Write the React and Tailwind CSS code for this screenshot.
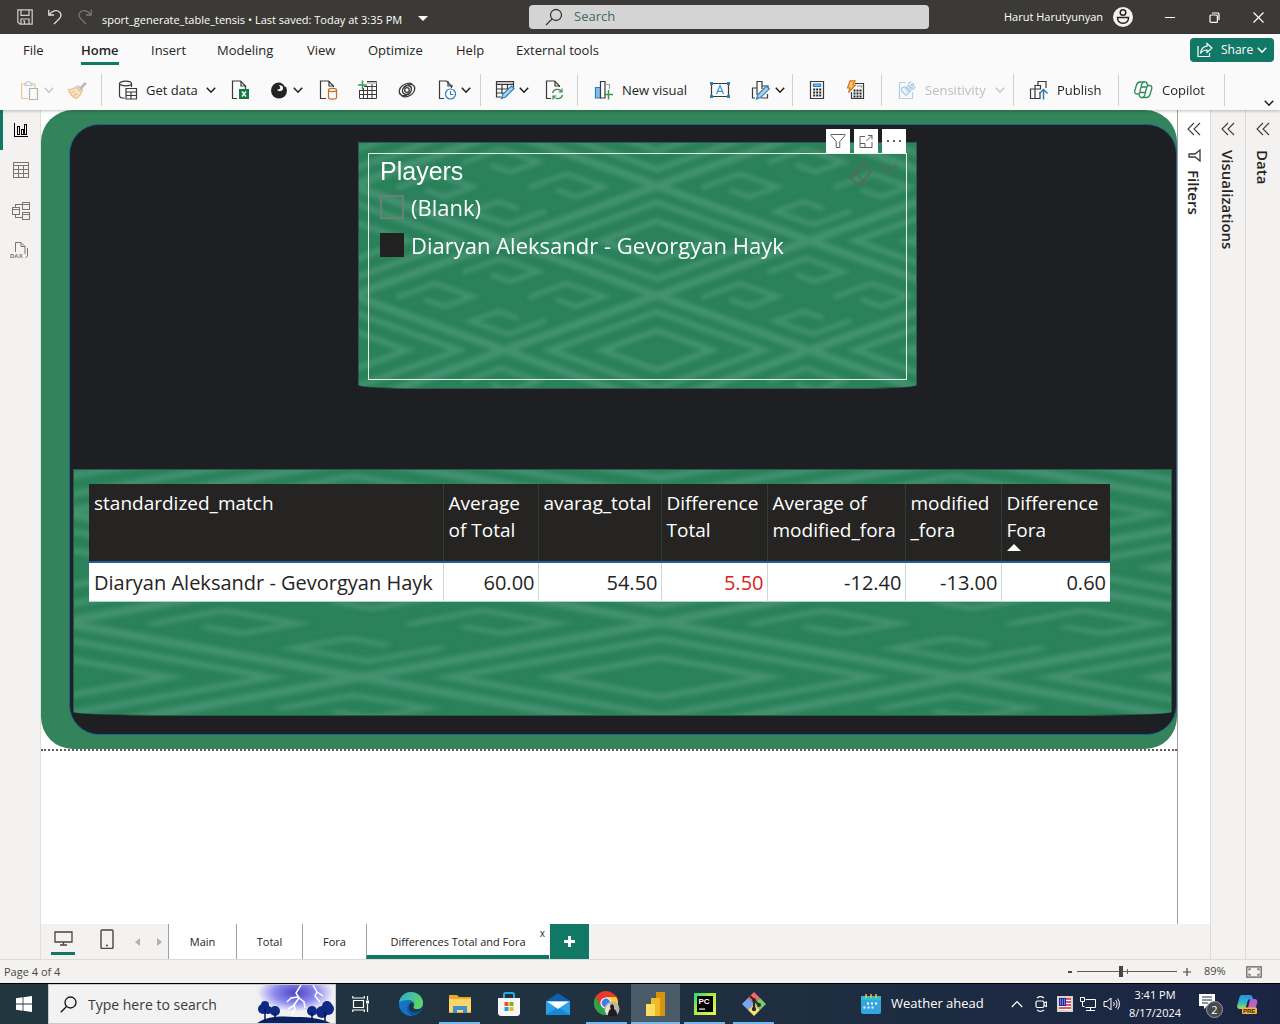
import React from "react";

/* ---------- shared helpers ---------- */

function Svg({ w = 20, h = 20, className = "", children, ...rest }) {
  return (
    <svg
      width={w}
      height={h}
      viewBox={`0 0 ${w} ${h}`}
      fill="none"
      stroke="#3b3a39"
      strokeWidth="1.2"
      className={"block shrink-0 " + className}
      aria-hidden="true"
      {...rest}
    >
      {children}
    </svg>
  );
}

function Chevron({ color = "#201f1e", className = "" }) {
  return (
    <Svg w={10} h={8} className={className} stroke={color} strokeWidth="1.5">
      <path d="M.8 1.8 5 6.2 9.2 1.8" />
    </Svg>
  );
}

function Separator() {
  return <div className="h-8 w-px shrink-0 bg-[#d2d0ce]" />;
}

/* ---------- ribbon icons ---------- */

const PageOutline = ({ d = "M7 19H3V1h8l5 5v4" }) => (
  <>
    <path d={d} />
    <path d="M11 1v5h5" />
  </>
);

const PasteIcon = () => (
  <Svg stroke="#f0c595">
    <path d="M8 18.5H1.600V4H5M12 4h3v4" />
    <path d="M5 5.500V3.500h1.500a2 2 0 0 1 4 0H12v2z" stroke="#c8c6c4" />
    <path d="M9.500 8.500h8v11h-8z" stroke="#b5b3b1" />
  </Svg>
);

const BrushIcon = () => (
  <Svg stroke="#b5b3b1">
    <path d="m9 7 5.500 5.500M10.500 5.500l5.500 5.500M13 8l4.800-5.200 1 1L14 9" />
    <path d="M9 7C7 9 4 9.500 1.500 9.500c1 4 4 7.500 8 9 2-1.500 4-3.500 5-6z" fill="#fbe3c8" stroke="#eebd88" />
    <path d="m4 12.500 4-1M6.500 15.500l4-2" stroke="#eebd88" />
  </Svg>
);

const GetDataIcon = () => (
  <Svg>
    <ellipse cx="7.500" cy="3.500" rx="6" ry="2.300" />
    <path d="M1.500 3.500v12.500c0 1 2 2 5 2.200M13.500 3.500V7" />
    <path d="M8 8.500h10.500v10.500H8zM8 12h10.500M8 15.500h10.500M13 12v7" />
  </Svg>
);

const ExcelIcon = () => (
  <Svg>
    <PageOutline d="M7 18.500H2.500V1h8l5 5v3" />
    <path d="M9 9h10v10H9z" fill="#107c41" stroke="none" />
    <path d="m12 11.500 4 5M16 11.500l-4 5" stroke="#fff" strokeWidth="1.500" />
  </Svg>
);

const LakeIcon = () => (
  <Svg>
    <circle cx="10" cy="10.500" r="8" fill="#252423" stroke="none" />
    <path d="M9.500 5.500c2-.8 4 0 4.500 2 .3 1.500-.6 3-2 3.500-1.700.5-3.400-.3-4-1.500 2 .3 3.300-.5 3.200-2-.1-1-.7-1.700-1.700-2z" fill="#fff" stroke="none" />
    <path d="M12 1.500c3 .5 5.500 2.500 6.500 5l-2.500.5c-.8-2-2.200-3.300-4-4z" fill="#fafafa" stroke="none" />
  </Svg>
);

const SqlIcon = () => (
  <Svg>
    <PageOutline d="M8 18.500H2.500V1h8l5 5v1" />
    <ellipse cx="14.500" cy="10" rx="4" ry="1.600" stroke="#ca6a1c" />
    <path d="M10.500 10v7.500c0 2.200 8 2.200 8 0V10" stroke="#ca6a1c" />
  </Svg>
);

const EnterDataIcon = () => (
  <Svg>
    <path d="M10 1.500h9.500v17h-17V10M2.500 10.500h17M6.500 8v10.500M10.500 6v12.500M15 2v16.500M7 6.500h12.500M2.500 14.500h17" strokeWidth="1" />
    <path d="M10 2h9.500v2H10z" fill="#c8c6c4" stroke="none" />
    <path d="M5.500.5v9M1 5h9" stroke="#3a9a55" strokeWidth="1.500" />
  </Svg>
);

const DataverseIcon = () => (
  <Svg strokeWidth="1.300">
    <path d="M13 13c-3 2.500-7.500 1.500-7.500-2C5.500 7 11 3.500 15 4.500c4 1.500 3.500 7-.5 10-4 2.500-7.500 3-9.500 1.500" />
    <path d="M7 7c3-2.500 7.500-1.500 7.500 2 0 4-5.500 7.500-9.500 6.500-4-1.500-3.500-7 .5-10C9.500 3 13 2.500 15 4" />
    <circle cx="10" cy="10" r="2.300" />
  </Svg>
);

const RecentIcon = () => (
  <Svg>
    <PageOutline d="M7 18.500H2.500V1h7l5 5v2" />
    <circle cx="13.500" cy="14" r="5" fill="#fff" stroke="#2b7cb8" />
    <path d="M13.500 11v3.500h3" stroke="#2b7cb8" />
  </Svg>
);

const TransformIcon = () => (
  <Svg>
    <path d="M1.500 1.500h17v3h-17z" fill="#c8c6c4" />
    <path d="M1.500 4.500v12.500H6M18.500 4.500v3M1.500 9H14M1.500 13h7M7 4.500V14M12.500 4.500V9" />
    <path d="m6.500 18.500 1.500-4.500 8.500-8 2.500 2.500-8.500 8.500z" fill="#a8d3f2" stroke="#2b7cb8" />
  </Svg>
);

const RefreshIcon = () => (
  <Svg>
    <PageOutline d="M7 18.500H2.500V1h8l5 5v1" />
    <path d="M8.500 13c1-4 6.500-5 9-1.500M18 8.500v3.500h-3.500M18.500 15c-1 4-6.500 5-9 1.500M9 19.500V16h3.500" stroke="#3a8c4f" />
  </Svg>
);

const NewVisualIcon = () => (
  <Svg>
    <path d="M1.500 7.500h5V18h-5z" fill="#83beec" stroke="#2b7cb8" />
    <path d="M6.500 18V1.500H11V18z" fill="#fff" />
    <path d="M11 4.500h4.500V9" stroke="#a19f9d" />
    <path d="M14.500 10v9.500M10 14.500h9" stroke="#3a9a55" strokeWidth="1.500" />
  </Svg>
);

const TextBoxIcon = () => (
  <Svg>
    <path d="M1.500 3.500h17v13h-17z" />
    <path d="M0 2h3v3H0zM17 2h3v3h-3zM0 15h3v3H0zM17 15h3v3h-3z" fill="#2b7cb8" stroke="none" />
    <path d="m6.500 14 3.500-8.500L13.500 14M7.800 11.300h4.400" stroke="#3a96dd" />
  </Svg>
);

const MoreVisualsIcon = () => (
  <Svg>
    <path d="M4 18H1.500V8H6V1.500h5V9M6 8v7M11 6h6v2M16.500 14v4H10" />
    <path d="m5.500 19 1.500-4.500 8.500-8.500 2.800 2.800-8.500 8.500z" fill="#a8d3f2" stroke="#2b7cb8" />
  </Svg>
);

const CalcIcon = () => (
  <Svg>
    <path d="M3.500 1.500h13v17h-13z" />
    <path
      d="M6.200 8.500h2v2h-2zM9.200 8.500h2v2h-2zM12.200 8.500h2v2h-2zM6.200 11.500h2v2h-2zM9.200 11.500h2v2h-2zM12.200 11.500h2v2h-2zM6.200 14.500h2v2h-2zM9.200 14.500h2v2h-2zM12.200 14.500h2v2h-2z"
      fill="#252423"
      stroke="none"
    />
    <path d="M6.500 4h7v2.500h-7z" fill="#83beec" stroke="#2b7cb8" />
  </Svg>
);

const QuickIcon = () => (
  <Svg>
    <path d="M9 3.500h8.500v15H5.500V12" />
    <path d="M7.500 9.500h2v2h-2zM10.500 9.500h2v2h-2zM13.500 9.500h2v2h-2zM7.500 12.500h2v2h-2zM10.500 12.500h2v2h-2zM13.500 12.500h2v2h-2zM7.500 15.500h2v2h-2zM10.500 15.500h2v2h-2zM13.500 15.500h2v2h-2z" fill="#252423" stroke="none" />
    <path d="M11 6h4.500v1.500" stroke="#8a8886" />
    <path d="M4 .8h5L7 5h2.500L2.500 12.500 4 8H1.500z" fill="#fbc16f" stroke="#d07a20" />
  </Svg>
);

const SensitivityIcon = () => (
  <Svg stroke="#a9cbe4">
    <path d="M9 2.500H2.500v16h13V12" stroke="#b4cfe2" />
    <path d="m4.500 8 3-1 5 5-3.500 3.500L4.500 11z" fill="#e9f3fa" />
    <path d="m9 6.500 5 5M10.500 5l5 5M12.500 6.500 15 4c1-1 2.500.5 1.500 1.500L14 8M11 4l3-2.500M15.500 9.500 18.500 7" strokeWidth="1.300" />
  </Svg>
);

const PublishIcon = () => (
  <Svg>
    <path d="M6.500 18.500h-5V9H6v9.500M6 12V5.500h5.500v4M9 5.500V1.500h8V8M11 9h-5M6.500 18.500H11V12" />
    <path d="M14.500 19.500V10M10.500 13.500l4-4 4 4" stroke="#2b7cb8" strokeWidth="1.500" />
  </Svg>
);

const CopilotIcon = () => (
  <Svg stroke="#2d8a55" strokeWidth="1.300">
    <path d="M4.500 14H3c-2 0-2.600-1.500-2.200-3.300L2.500 5C3.200 2.800 4 2 6 2h5.500c1.200 0 1.600 1 2 3.200" />
    <path d="M13 5.500h2.500c2 0 2.600 1.500 2.200 3.300L16 14.500c-.7 2.200-1.500 3-3.500 3H7c-1.200 0-1.600-1-2-3.500" />
    <path d="M9.500 2.200c-1 .3-1.500 1.300-1.900 2.600L5.800 12c-.4 1.400-.6 2-1.500 2M9 17.300c1-.3 1.500-1.300 1.900-2.600l1.800-7.200c.4-1.400.6-2 1.500-2" />
    <path d="M7 7h5.500M6 12.500h5.500" />
  </Svg>
);

/* ---------- title bar ---------- */

function TitleBar() {
  return (
    <header className="flex h-[34px] shrink-0 items-center bg-[#3b3a37] text-white">
      <div className="flex w-[529px] shrink-0 items-center pl-[17px]">
        <button aria-label="Save">
          <Svg w={16} h={16} stroke="#d2d0ce">
            <path d="M.8.8h14.400v14.400H3L.8 13z" />
            <path d="M4 .8v5.500h8V.8M4 15v-5h8v5M6 12h1.500v3" />
          </Svg>
        </button>
        <button aria-label="Undo" className="ml-[14px]">
          <Svg w={16} h={16} stroke="#e1dfdd" strokeWidth="1.300">
            <path d="M1.800.8V6H7M2 5.800C5 2 9.500.2 12.500 3c2.500 2.500 1.500 5-.5 7l-5 5" />
          </Svg>
        </button>
        <button aria-label="Redo" className="ml-[14px]" disabled>
          <Svg w={16} h={16} stroke="#797775" strokeWidth="1.300">
            <path d="M14.200.8V6H9M14 5.800C11 2 6.500.2 3.500 3 1 5.500 2 8 4 10l5 5" />
          </Svg>
        </button>
        <button className="ml-[9px] flex items-center whitespace-nowrap pt-[6px] text-[11px] leading-4">
          <span className="w-[310px] text-left">sport_generate_table_tensis • Last saved: Today at 3:35 PM</span>
          <span className="mb-1 ml-[6px] border-x-[5px] border-t-[5px] border-x-transparent border-t-white" />
        </button>
      </div>
      <label className="flex h-6 w-[400px] shrink-0 items-center rounded-sm bg-[#d4d4d4] pl-4">
        <Svg w={18} h={18} strokeWidth="1.300">
          <circle cx="11" cy="7" r="5.500" />
          <path d="m7 11-6 6" />
        </Svg>
        <input
          aria-label="Search"
          placeholder="Search"
          className="ml-[11px] min-w-0 flex-1 bg-transparent text-[13px] text-[#2b5c4e] outline-none placeholder:text-[#3d6b5e]"
        />
      </label>
      <div className="flex flex-1 items-center justify-end">
        <button className="flex items-center gap-[10px] whitespace-nowrap text-[11px]">
          Harut Harutyunyan
          <Svg w={20} h={20} stroke="#252423" strokeWidth="1.500">
            <circle cx="10" cy="10" r="10" fill="#f3f2f1" stroke="none" />
            <circle cx="10" cy="5.500" r="2.800" />
            <path d="M4.500 10.500h11c0 3.500-2 5.700-5.500 5.700s-5.500-2.200-5.500-5.700z" />
          </Svg>
        </button>
        <button aria-label="Minimize" className="ml-[15px] flex h-8 w-11 items-center justify-center">
          <span className="h-px w-[10px] bg-white" />
        </button>
        <button aria-label="Restore" className="flex h-8 w-11 items-center justify-center">
          <Svg w={11} h={11} stroke="#fff" strokeWidth="1.200">
            <rect x="1" y="3" width="7.400" height="7.400" rx="1" />
            <path d="M3 1h6.200l.8.800V8" />
          </Svg>
        </button>
        <button aria-label="Close" className="flex h-8 w-11 items-center justify-center">
          <Svg w={11} h={11} stroke="#fff" strokeWidth="1.200">
            <path d="m.5.5 10 10M10.500.5l-10 10" />
          </Svg>
        </button>
      </div>
    </header>
  );
}

/* ---------- ribbon ---------- */

const menus = [
  ["File", "w-[58px]"],
  ["Home", "w-[70px]"],
  ["Insert", "w-[66px]"],
  ["Modeling", "w-[90px]"],
  ["View", "w-[61px]"],
  ["Optimize", "w-[88px]"],
  ["Help", "w-[60px]"],
  ["External tools", "w-[100px]"],
];

function Tool({ label, icon, chevron, disabled, className = "" }) {
  return (
    <button aria-label={label} disabled={disabled} className={"flex shrink-0 items-center " + className}>
      {icon}
      {chevron && <Chevron className="ml-1" color={disabled ? "#c8c6c4" : undefined} />}
    </button>
  );
}

function TextTool({ icon, label, width, chevron, disabled, className = "" }) {
  return (
    <button
      disabled={disabled}
      className={
        "flex shrink-0 items-center gap-2 whitespace-nowrap text-[13px] leading-5 " +
        (disabled ? "text-[#c0bebc] " : "text-[#201f1e] ") +
        className
      }
    >
      {icon}
      <span className={"text-left " + width}>{label}</span>
      {chevron && <Chevron color={disabled ? "#c8c6c4" : undefined} />}
    </button>
  );
}

function Ribbon() {
  return (
    <div className="relative z-10 shrink-0 bg-[#fafafa] shadow-[0_1px_3px_rgba(0,0,0,0.25)]">
      <nav className="flex h-8 items-center pl-[23px]">
        {menus.map(([name, width]) => (
          <button key={name} className={"flex whitespace-nowrap text-left text-[13px] leading-5 text-[#252423] " + width}>
            <span
              className={
                name === "Home" ? "relative font-semibold after:absolute after:inset-x-0 after:-bottom-[5px] after:h-[3px] after:bg-[#117865]" : ""
              }
            >
              {name}
            </span>
          </button>
        ))}
        <button className="ml-auto mr-[6px] flex h-6 w-[84px] items-center rounded bg-[#117865] pl-[7px] text-[12px] text-white">
          <Svg w={16} h={16} stroke="#fff">
            <path d="M1 4v10.500h11.500V11" />
            <path d="M10 1.500 15 6l-5 4.500V8C7 8 5 9 3.500 11.500 4 7 6.500 4.500 10 4.200z" />
          </Svg>
          <span className="ml-2 mr-1">Share</span>
          <Chevron color="#fff" />
        </button>
      </nav>
      <div className="flex h-11 items-center pt-1">
        <div className="flex w-[101px] shrink-0 items-center pl-5">
          <Tool label="Paste" icon={<PasteIcon />} chevron disabled className="-mr-px" />
          <Tool label="Format painter" icon={<BrushIcon />} disabled className="ml-[14px]" />
        </div>
        <Separator />
        <div className="flex w-[378px] shrink-0 items-center pl-4">
          <TextTool icon={<GetDataIcon />} label="Get data" width="w-[52px]" chevron />
          <Tool label="Excel workbook" icon={<ExcelIcon />} className="ml-[14px]" />
          <Tool label="OneLake data hub" icon={<LakeIcon />} chevron className="ml-[19px]" />
          <Tool label="SQL Server" icon={<SqlIcon />} className="ml-[15px]" />
          <Tool label="Enter data" icon={<EnterDataIcon />} className="ml-[19px]" />
          <Tool label="Dataverse" icon={<DataverseIcon />} className="ml-[20px]" />
          <Tool label="Recent sources" icon={<RecentIcon />} chevron className="ml-[20px]" />
        </div>
        <Separator />
        <div className="flex w-[96px] shrink-0 items-center pl-[14px]">
          <Tool label="Transform data" icon={<TransformIcon />} chevron />
          <Tool label="Refresh" icon={<RefreshIcon />} className="ml-[15px]" />
        </div>
        <Separator />
        <div className="flex w-[214px] shrink-0 items-center pl-4">
          <TextTool icon={<NewVisualIcon />} label="New visual" width="w-[66px]" />
          <Tool label="Text box" icon={<TextBoxIcon />} className="ml-[22px]" />
          <Tool label="More visuals" icon={<MoreVisualsIcon />} chevron className="ml-[21px]" />
        </div>
        <Separator />
        <div className="flex w-[88px] shrink-0 items-center pl-[14px]">
          <Tool label="New measure" icon={<CalcIcon />} />
          <Tool label="Quick measure" icon={<QuickIcon />} className="ml-[19px]" />
        </div>
        <Separator />
        <div className="flex w-[131px] shrink-0 items-center pl-[15px]">
          <TextTool icon={<SensitivityIcon />} label="Sensitivity" width="w-[62px]" chevron disabled />
        </div>
        <Separator />
        <div className="flex w-[104px] shrink-0 items-center pl-[15px]">
          <TextTool icon={<PublishIcon />} label="Publish" width="w-[46px]" />
        </div>
        <Separator />
        <div className="flex w-[105px] shrink-0 items-center pl-[15px]">
          <TextTool icon={<CopilotIcon />} label="Copilot" width="w-[46px]" />
        </div>
        <Separator />
        <button aria-label="Collapse ribbon" className="ml-auto mr-[6px] self-end pb-[3px]">
          <Chevron />
        </button>
      </div>
    </div>
  );
}

/* ---------- left rail ---------- */

function ViewRail() {
  return (
    <nav className="flex w-[41px] shrink-0 flex-col border-r border-[#e1dfdd] bg-[#f3f2f1]">
      <button aria-label="Report view" className="flex h-10 items-center border-l-[3px] border-[#117865] pl-[11px]">
        <Svg w={14} h={14} stroke="#000" strokeWidth="1" shapeRendering="crispEdges">
          <path d="M.5 0v13.500H14M3.500 3.500h2v8h-2zM7.500 6.500h2v5h-2zM10.500 1.500h2v10h-2z" />
        </Svg>
      </button>
      <button aria-label="Table view" className="flex h-10 items-center pl-[13px]">
        <Svg w={16} h={16} stroke="#797775" strokeWidth="1" shapeRendering="crispEdges">
          <path d="M.5.5h15v14.500H.5zM.5 3h15M.5 7h15M.5 11h15M5.500 3v12M10.500 3v12" />
        </Svg>
      </button>
      <button aria-label="Model view" className="flex h-10 items-center pl-[11px]">
        <Svg w={19} h={19} stroke="#797775" strokeWidth="1" shapeRendering="crispEdges">
          <path d="M1 6h7v7H1zM1 8.500h7M11 1h7v7h-7zM11 3.500h7M11 11h7v7h-7zM11 13.500h7M4.500 6V3H11M4.500 13v3H11" />
        </Svg>
      </button>
      <button aria-label="DAX query view" className="flex h-10 items-center pl-[10px]">
        <Svg w={19} h={18} stroke="#797775" strokeWidth="1">
          <path d="M5.500 11V1.500h5.500l4 4V13M11 1.500v4h4M17.500 7v8l-2 2" />
          <text x="0" y="16.500" fontSize="6" fontWeight="700" fontFamily="Liberation Sans, sans-serif" fill="#797775" stroke="none">
            DAX
          </text>
        </Svg>
      </button>
    </nav>
  );
}

/* ---------- woven card background ---------- */

const cells = [];
for (let i = -3; i <= 3; i++) {
  for (let j = -5; j <= 3; j++) {
    if ((i + j) % 2 === 0) cells.push({ x: 299 + i * 153, y: 208 + j * 55, solid: i % 2 === 0 });
  }
}
const diamond = (s) => `M${-153 * s} 0L0 ${-55 * s}L${153 * s} 0L0 ${55 * s}Z`;
const HOOK = "M-42 2L-4 -12L34 1L6 11L-14 4";
const hookSpots = ["translate(-66 0)", "translate(66 0)", "translate(0 -25)", "translate(0 27) rotate(180)"];

function Weave({ id }) {
  return (
    <svg
      viewBox="0 0 559 246"
      preserveAspectRatio="none"
      className="absolute inset-0 h-full w-full"
      aria-hidden="true"
    >
      <defs>
        <filter id={id} x="-5%" y="-5%" width="110%" height="110%">
          <feGaussianBlur stdDeviation="2.3" />
        </filter>
      </defs>
      <rect width="559" height="246" fill="#2a815a" />
      <g fill="none" stroke="#449270" strokeWidth="6" filter={`url(#${id})`}>
        {cells.map((c) => (
          <g key={`${c.x}/${c.y}`} transform={`translate(${c.x} ${c.y})`}>
            <path d={diamond(0.98)} />
            {c.solid ? (
              <>
                <path d={diamond(0.7)} />
                <path d={diamond(0.36)} />
              </>
            ) : (
              hookSpots.map((t) => <path key={t} d={HOOK} transform={t} strokeWidth="5" />)
            )}
          </g>
        ))}
      </g>
    </svg>
  );
}

/* ---------- report visuals ---------- */

const tickBox =
  "h-6 w-6 appearance-none border-2 border-[#6b7f74] checked:border-[#212121] checked:bg-[#212121]";

function PlayersSlicer() {
  return (
    <section className="relative ml-[288px] h-[247px] w-[559px] px-[10px] pb-[9px] pt-[11px]">
      <div className="absolute inset-0 overflow-hidden rounded-b-[60px_4px] border border-[#2c5b49]">
        <Weave id="weave-slicer" />
      </div>
      <fieldset className="relative h-full border border-[#e8f2ed] pl-[11px] text-white">
        <h2 className="pb-[2px] pt-[2px] font-['Liberation_Sans',sans-serif] text-[25px] leading-[30px]">Players</h2>
        <label className="flex h-[38px] items-center gap-[7px] text-[22px] leading-8">
          <input type="checkbox" className={tickBox} />
          (Blank)
        </label>
        <label className="flex h-[38px] items-center gap-[7px] whitespace-nowrap text-[22px] leading-8">
          <input type="checkbox" defaultChecked className={tickBox} />
          Diaryan Aleksandr - Gevorgyan Hayk
        </label>
        <div className="absolute right-[9px] top-[7px] flex gap-[6px]">
          <button aria-label="Clear selections">
            <Svg w={24} h={24} stroke="#5d665c" strokeWidth="1.500">
              <path d="M1.500 16 14 2l8 9-10.500 11.500h-5l-5-5.500zM6 11l8.500 9M6 22.500h12" />
            </Svg>
          </button>
          <button aria-label="Expand" className="self-start pt-[2px]">
            <Svg w={18} h={12} stroke="#5d665c" strokeWidth="1.500">
              <path d="m.5 1.500 8.500 8.500 8.500-8.500" />
            </Svg>
          </button>
        </div>
      </fieldset>
      <div className="absolute -top-[13px] right-[11px] flex gap-1">
        <button aria-label="Filters on this visual" className="flex h-6 w-6 items-center justify-center bg-white">
          <Svg w={16} h={16} stroke="#605e5c" strokeWidth="1">
            <path d="M1 1.500h14v1L9.800 8.500v6H6.200v-6L1 2.500z" />
          </Svg>
        </button>
        <button aria-label="Focus mode" className="flex h-6 w-6 items-center justify-center bg-white">
          <Svg w={14} h={14} stroke="#605e5c" strokeWidth="1">
            <path d="M6 2.500H1v11h12V8M1 9.500h5v4M7.500 7 13 1.500M9 1.500h4v4" />
          </Svg>
        </button>
        <button aria-label="More options" className="flex h-6 w-6 items-center justify-center gap-1 bg-white">
          <span className="h-[2px] w-[2px] bg-[#605e5c]" />
          <span className="h-[2px] w-[2px] bg-[#605e5c]" />
          <span className="h-[2px] w-[2px] bg-[#605e5c]" />
        </button>
      </div>
    </section>
  );
}

const columns = [
  { head: ["standardized_match"], value: "Diaryan Aleksandr - Gevorgyan Hayk", width: "w-[354px]" },
  { head: ["Average", "of Total"], value: "60.00", width: "w-[95px]" },
  { head: ["avarag_total"], value: "54.50", width: "w-[123px]" },
  { head: ["Difference", "Total"], value: "5.50", width: "w-[106px]" },
  { head: ["Average of", "modified_fora"], value: "-12.40", width: "w-[138px]" },
  { head: ["modified", "_fora"], value: "-13.00", width: "w-[96px]" },
  { head: ["Difference", "Fora"], value: "0.60", width: "w-[109px]", sorted: true },
];

function DifferenceTable() {
  return (
    <section className="relative ml-[3px] mr-1 mt-[80px] h-[247px] px-4 pt-[15px]">
      <div className="absolute inset-0 overflow-hidden rounded-b-[110px_4px] border border-[#2c5b49]">
        <Weave id="weave-table" />
      </div>
      <table className="relative w-[1021px] table-fixed border-collapse">
        <colgroup>
          {columns.map((c) => (
            <col key={c.head.join(" ")} className={c.width} />
          ))}
        </colgroup>
        <thead>
          <tr className="h-[78px] border-b-2 border-[#1f5f97] bg-[#252423] text-white">
            {columns.map((c) => (
              <th
                key={c.head.join(" ")}
                scope="col"
                className="border-r border-[#2f3d36] pl-[5px] pr-[3px] pt-[6px] text-left align-top text-[19px] font-normal leading-[27px] last:border-r-0"
              >
                {c.head.map((line) => (
                  <span key={line} className="block whitespace-nowrap">
                    {line}
                  </span>
                ))}
                {c.sorted && (
                  <span className="block w-0 border-x-[7px] border-b-[7px] border-x-transparent border-b-white" />
                )}
              </th>
            ))}
          </tr>
        </thead>
        <tbody>
          <tr className="h-[39px] border-b border-[#b5d3c4] bg-white text-[#252423]">
            {columns.map((c, i) => (
              <td
                key={c.head.join(" ")}
                className={
                  "whitespace-nowrap border-r border-[#ccdad3] pl-[5px] pr-[3px] pt-[2px] text-[20px] leading-7 last:border-r-0 last:pr-1 " +
                  (i === 0 ? "text-left" : "text-right") +
                  (c.value === "5.50" ? " text-[#e01b22]" : "")
                }
              >
                {c.value}
              </td>
            ))}
          </tr>
        </tbody>
      </table>
    </section>
  );
}

function Canvas() {
  return (
    <main className="min-w-0 flex-1 bg-white">
      <div className="border-b-2 border-dotted border-[#605e5c]">
        <div className="rounded-[32px] bg-[#34845b] pb-[14px] pl-7 pt-[14px]">
          <div className="rounded-[30px] border border-[#1b6096] bg-[#1e1f22] pb-[18px] pt-[17px]">
            <PlayersSlicer />
            <DifferenceTable />
          </div>
        </div>
      </div>
    </main>
  );
}

/* ---------- side panes ---------- */

function PaneToggle({ label }) {
  return (
    <button aria-label={label}>
      <Svg w={14} h={14} stroke="#3b3a39" strokeWidth="1.100">
        <path d="M7 1 1 7l6 6M13 1 7 7l6 6" />
      </Svg>
    </button>
  );
}

function SidePane({ name, className, icon }) {
  return (
    <aside className={"flex shrink-0 flex-col items-center pt-3 text-[#252423] " + className}>
      <PaneToggle label={`Expand ${name}`} />
      {icon}
      <h2 className={"text-[15px] font-semibold leading-5 [writing-mode:vertical-rl] " + (icon ? "mt-2" : "mt-[14px]")}>{name}</h2>
    </aside>
  );
}

/* ---------- page tabs and status ---------- */

const pages = [
  ["Main", "w-[68px]"],
  ["Total", "w-[66px]"],
  ["Fora", "w-[64px]"],
];

function PageTabs() {
  return (
    <div className="flex h-[35px] shrink-0 items-stretch bg-[#f3f2f1] text-[11px] text-[#252423]">
      <button aria-label="Desktop layout" className="ml-[10px] flex w-6 flex-col items-center pt-[7px]">
        <Svg w={19} h={15} stroke="#484644" strokeWidth="1.300">
          <path d="M1 1h17v10H1zM9.500 11v3M6 14h7" />
        </Svg>
        <span className="mt-[6px] h-[3px] w-6 bg-[#117865]" />
      </button>
      <button aria-label="Mobile layout" className="ml-[25px] pb-[5px]">
        <Svg w={14} h={20} stroke="#484644" strokeWidth="1.400">
          <rect x="1" y="1" width="12" height="18.500" rx="1" />
          <path d="M6 16.500h2" />
        </Svg>
      </button>
      <button aria-label="Previous page" className="ml-[21px]">
        <span className="block border-y-[4px] border-r-[5px] border-y-transparent border-r-[#b3b0ad]" />
      </button>
      <button aria-label="Next page" className="ml-[17px] mr-[6px]">
        <span className="block border-y-[4px] border-l-[5px] border-y-transparent border-l-[#b3b0ad]" />
      </button>
      {pages.map(([name, width]) => (
        <button key={name} className={"border-l border-[#a19f9d] bg-white pt-[2px] " + width}>
          {name}
        </button>
      ))}
      <div className="relative flex w-[183px] border-b-4 border-l border-b-[#117865] border-l-[#a19f9d] bg-white">
        <button className="flex-1 whitespace-nowrap pt-[6px] font-medium">Differences Total and Fora</button>
        <button aria-label="Delete page" className="absolute right-1 top-[3px] text-[10px] leading-3">
          x
        </button>
      </div>
      <button aria-label="New page" className="ml-px flex w-[39px] items-center justify-center bg-[#117865]">
        <Svg w={11} h={11} stroke="#fff" strokeWidth="3">
          <path d="M5.500 0v11M0 5.500h11" />
        </Svg>
      </button>
    </div>
  );
}

function StatusBar() {
  return (
    <footer className="flex h-6 shrink-0 items-center border-t border-[#dddbd9] bg-[#f3f2f1] text-[11px] text-[#484644]">
      <span className="pl-1 pt-[2px]">Page 4 of 4</span>
      <button aria-label="Zoom out" className="ml-auto flex h-4 items-center">
        <span className="h-[2px] w-1 bg-[#484644]" />
      </button>
      <div className="relative ml-[5px] flex h-4 w-[100px] items-center">
        <input
          type="range"
          aria-label="Zoom"
          min="0"
          max="100"
          defaultValue="44"
          className="h-4 w-full appearance-none bg-transparent [&::-webkit-slider-runnable-track]:h-px [&::-webkit-slider-runnable-track]:bg-[#605e5c] [&::-webkit-slider-thumb]:-mt-[5px] [&::-webkit-slider-thumb]:h-[11px] [&::-webkit-slider-thumb]:w-1 [&::-webkit-slider-thumb]:appearance-none [&::-webkit-slider-thumb]:bg-[#484644]"
        />
        <span className="absolute left-[50px] h-[5px] w-px bg-[#605e5c]" />
      </div>
      <button aria-label="Zoom in" className="ml-[6px]">
        <Svg w={8} h={8} stroke="#484644" strokeWidth="1.200">
          <path d="M4 0v8M0 4h8" />
        </Svg>
      </button>
      <span className="ml-[13px] w-[24px] whitespace-nowrap">89%</span>
      <button aria-label="Fit to page" className="ml-[18px] mr-[18px]">
        <Svg w={16} h={12} stroke="#605e5c" strokeWidth="1.200">
          <path d="M.8.8h14.400v10.400H.8zM3 4.500V3h2M11 3h2v1.500M13 7.500V9h-2M5 9H3V7.500" />
        </Svg>
      </button>
    </footer>
  );
}

/* ---------- taskbar ---------- */

const StormArt = () => (
  <svg width="79" height="39" viewBox="0 0 79 39" className="block shrink-0" aria-hidden="true">
    <defs>
      <radialGradient id="storm" cx="0.500" cy="0.200" r="0.480">
        <stop offset="0" stopColor="#4a44c0" />
        <stop offset="0.550" stopColor="#8b88ee" />
        <stop offset="1" stopColor="#f0f0f4" />
      </radialGradient>
    </defs>
    <path d="M0 0h79v39H0z" fill="url(#storm)" />
    <path
      d="m45 0-5 8 3 5-5 7 1 4-4 8M42 12l-7 1-4 4M39 20l-7 4M42 12l6 5 1 6M57 0l4 7-2 4 5 6M61 7l6 4"
      fill="none"
      stroke="#fff"
      strokeWidth="1.500"
    />
    <path d="M0 39c10-8 24-8 40-7 15 0 28 2 36 7z" fill="#0b1f63" />
    <g fill="#0d2a86">
      <circle cx="7" cy="24" r="5" />
      <circle cx="9" cy="20" r="4" />
      <circle cx="12" cy="25" r="4" />
      <circle cx="19" cy="26" r="5" />
      <circle cx="56" cy="26" r="5" />
      <circle cx="72" cy="24" r="6" />
      <circle cx="66" cy="27" r="6" />
      <circle cx="71" cy="21" r="5" />
    </g>
    <path d="M9 24v12M19 28v7M56 28v6M69 26v10" stroke="#081548" strokeWidth="1.500" />
  </svg>
);

const TaskViewIcon = () => (
  <Svg w={18} h={16} stroke="#fff" strokeWidth="1.200">
    <path d="M1.500 4.500h10v7h-10zM.8 0v2h11.500V0M.8 16v-2h11.500v2M15.500 0v4M15.500 8v8" />
    <path d="M14 4.500h3v3h-3z" fill="#fff" stroke="none" />
  </Svg>
);

const EdgeIcon = () => (
  <Svg w={24} h={24} stroke="none">
    <defs>
      <linearGradient id="edgeTop" x1="0" y1="0" x2="1" y2="0.500">
        <stop offset="0" stopColor="#2aa8e0" />
        <stop offset="1" stopColor="#5fd65c" />
      </linearGradient>
      <linearGradient id="edgeLow" x1="0" y1="0" x2="0" y2="1">
        <stop offset="0" stopColor="#1b8ad8" />
        <stop offset="1" stopColor="#0c4fa0" />
      </linearGradient>
    </defs>
    <circle cx="12" cy="12" r="12" fill="url(#edgeLow)" />
    <path d="M0 11C1 4 6 0 12 0c7 0 12 5 12 11 0 4-3 6-6 6-2.500 0-4-1-3.500-2 2-2.500.5-7-4.500-7C5 8 1 9 0 11z" fill="url(#edgeTop)" />
    <path d="M14.500 14.500c-1 1.500.5 3 3.500 3 2 0 4-1 5-2-1.500 4-5 5.500-8.500 5C9 20 8 13 12 10.500c2 .5 3.500 2.500 2.500 4z" fill="#203643" />
    <path d="M8.500 11C6 15 8 22 14 23.800 5 25 0 17 0 11.500 2 9 7 8 10.500 9.500z" fill="#1673c4" />
  </Svg>
);

const ExplorerIcon = () => (
  <Svg w={22} h={18} stroke="none">
    <path d="M0 0h8l2 2h12v16H0z" fill="#e8a92c" />
    <path d="M0 4h22v13H0z" fill="#fbd669" />
    <path d="M4 18v-7h14v7h-4v-3H8v3z" fill="#3f8fd4" />
  </Svg>
);

const StoreIcon = () => (
  <Svg w={24} h={24} stroke="none">
    <path d="M7 6V2.500C7 1.500 7.500 1 8.500 1h7c1 0 1.500.5 1.500 1.500V6" fill="none" stroke="#2aa6e2" strokeWidth="2" />
    <path d="M1 6h22v15c0 1.500-1 3-3 3H4c-2 0-3-1.500-3-3z" fill="#f5f5f5" />
    <path d="M7.500 10h4v4h-4z" fill="#e8502a" />
    <path d="M12.500 10h4v4h-4z" fill="#7ab41f" />
    <path d="M7.500 15h4v4h-4z" fill="#1f9ee0" />
    <path d="M12.500 15h4v4h-4z" fill="#f5b61a" />
  </Svg>
);

const MailIcon = () => (
  <Svg w={24} h={22} stroke="none">
    <path d="M0 8 12 0l12 8v4H0z" fill="#0f5fae" />
    <path d="M0 8v14h24V8z" fill="#2aa0ea" />
    <path d="m0 22 12-8 12 8z" fill="#1787d8" />
    <path d="M1 8.500h22L12 16z" fill="#fff" />
  </Svg>
);

const ChromeIcon = () => (
  <Svg w={26} h={26} stroke="none">
    <circle cx="12" cy="12" r="12" fill="#e33b2e" />
    <path d="M1.600 6A12 12 0 0 0 12 24l5.200-9L12 12 6.800 15z" fill="#2ba24c" />
    <path d="M12 24A12 12 0 0 0 22.400 6H12l5.200 9z" fill="#fcc934" />
    <circle cx="12" cy="12" r="5.600" fill="#fff" />
    <circle cx="12" cy="12" r="4.400" fill="#3b7ded" />
    <circle cx="18" cy="18" r="7.500" fill="#b9b3aa" />
    <path d="M14 25c0-4 1-6 3-7l-1-3 2-2 2 2v3c2 1 3 3 3 6-2 2-6 2.500-9 1z" fill="#1f1c1b" />
    <path d="M11 20c1-4 3-7 5-7l-1 6-2 5z" fill="#e9e4da" />
  </Svg>
);

const PowerBiIcon = () => (
  <Svg w={20} h={24} stroke="none">
    <path d="M10 0h9v24h-9z" fill="#d9930d" />
    <path d="M5 6h9v18H5z" fill="#eebb27" />
    <path d="M0 12h9v12H0z" fill="#fbdd5f" />
  </Svg>
);

const PyCharmIcon = () => (
  <Svg w={22} h={22} stroke="none">
    <defs>
      <linearGradient id="pc" x1="0" y1="0" x2="1" y2="1">
        <stop offset="0" stopColor="#21d789" />
        <stop offset="0.400" stopColor="#a5e83d" />
        <stop offset="1" stopColor="#e8f84a" />
      </linearGradient>
    </defs>
    <path d="M0 0h22v22H0z" fill="url(#pc)" />
    <path d="M3 3h16v16H3z" fill="#000" />
    <text x="4.500" y="11" fontSize="8" fontWeight="700" fontFamily="Liberation Sans, sans-serif" fill="#fff">
      PC
    </text>
    <path d="M5 15.500h6v1.200H5z" fill="#fff" />
  </Svg>
);

const GitIcon = () => (
  <Svg w={24} h={24} stroke="none">
    <path d="m12 0 6 6-6 6-6-6z" fill="#ef6b6b" />
    <path d="m6 6 6 6-6 6-6-6z" fill="#7ba7f0" />
    <path d="m18 6 6 6-6 6-6-6z" fill="#7fc96b" />
    <path d="m12 12 6 6-6 6-6-6z" fill="#f5e07a" />
    <path d="m8 4 4 4v9M12 8l5 5" fill="none" stroke="#2b2b2b" strokeWidth="2" />
    <circle cx="12" cy="8" r="2" fill="#2b2b2b" />
    <circle cx="12" cy="17" r="2.200" fill="#2b2b2b" />
    <circle cx="17" cy="13" r="2" fill="#2b2b2b" />
  </Svg>
);

const apps = [
  { name: "Microsoft Edge", icon: <EdgeIcon /> },
  { name: "File Explorer", icon: <ExplorerIcon />, open: true },
  { name: "Microsoft Store", icon: <StoreIcon /> },
  { name: "Mail", icon: <MailIcon /> },
  { name: "Google Chrome", icon: <ChromeIcon />, open: true },
  { name: "Power BI Desktop", icon: <PowerBiIcon />, open: true, active: true },
  { name: "PyCharm", icon: <PyCharmIcon />, open: true },
  { name: "Git", icon: <GitIcon />, open: true },
];

function Tray() {
  return (
    <div className="ml-auto flex h-full shrink-0 items-center">
      <button className="flex items-center gap-[10px] whitespace-nowrap text-[13px]">
        <Svg w={20} h={20} stroke="none">
          <rect y="2" width="20" height="18" rx="2" fill="#33a6dd" />
          <path d="M0 2h20v4H0z" fill="#2fc0d0" />
          <path d="M5 0v4M10 0v4M15 0v4" stroke="#f2c230" strokeWidth="1.500" />
          <path d="M6 9.500h12M2.500 13.500h12" stroke="#fff" strokeWidth="2" strokeDasharray="2 2" />
        </Svg>
        <span className="w-[95px] text-left">Weather ahead</span>
      </button>
      <button aria-label="Show hidden icons" className="ml-[25px]">
        <Svg w={12} h={8} stroke="#fff">
          <path d="m.8 7 5.200-5.500L11.200 7" />
        </Svg>
      </button>
      <button aria-label="Camera" className="ml-3">
        <Svg w={12} h={16} stroke="#fff">
          <rect x="1" y="5" width="8" height="6.500" rx="1.500" />
          <path d="m9 7 2.500-1v4.500L9 9.500M2 2c2-1.500 5-1.500 7 0M2 14c2 1.500 5 1.500 7 0" />
        </Svg>
      </button>
      <button aria-label="Keyboard language" className="ml-[10px]">
        <Svg w={16} h={16} stroke="none">
          <path d="M0 0h16v16H0z" fill="#d8d4cc" />
          <path d="M2 2h12v12H2z" fill="#fff" />
          <path d="M8 3h6M8 6h6M8 9h6M2 12h12" stroke="#d8203a" strokeWidth="1.500" />
          <path d="M2 2h7v8H2z" fill="#1d2a9c" />
          <path d="M3 4h5M3 6h5M3 8h5" stroke="#cfd4ff" strokeWidth="1" strokeDasharray="1 1" />
        </Svg>
      </button>
      <button aria-label="Network" className="ml-[7px]">
        <Svg w={16} h={16} stroke="#fff" strokeWidth="1">
          <path d="M5.500 3.500h10v8h-10M10.500 11.500v3M6 14.500h9M.5 1.500h4v4h-4zM2.500 5.500v5h2" />
        </Svg>
      </button>
      <button aria-label="Volume" className="ml-[7px]">
        <Svg w={17} h={16} stroke="#fff" strokeWidth="1">
          <path d="M1 5.500h3L8 2v12l-4-3.500H1zM10.500 6c1 1.200 1 2.800 0 4M12.500 4c2 2.200 2 5.800 0 8M14.500 2.500c2.500 3 2.500 8 0 11" />
        </Svg>
      </button>
      <button className="ml-[7px] w-[56px] whitespace-nowrap text-center text-[11px] leading-[18px]">
        <time>
          3:41 PM
          <br />
          8/17/2024
        </time>
      </button>
      <button aria-label="2 notifications" className="relative ml-4 pt-1">
        <Svg w={24} h={24} stroke="none">
          <path d="M0 0h16v12H8l-3 3v-3H0z" fill="#fff" />
          <path d="M3 3h10M3 6h10M3 9h6" stroke="#1c2b44" strokeWidth="1" />
          <circle cx="15.500" cy="15.500" r="8" fill="#45474d" stroke="#9a9ca0" strokeWidth="1" />
          <text x="15.500" y="19.500" textAnchor="middle" fontSize="11" fontFamily="Open Sans, sans-serif" fill="#fff">
            2
          </text>
        </Svg>
      </button>
      <button aria-label="Copilot preview" className="ml-[14px] mr-[22px]">
        <Svg w={21} h={20} stroke="none">
          <defs>
            <linearGradient id="copilotLeft" x1="0" y1="0" x2="0" y2="1">
              <stop offset="0" stopColor="#2f8be8" />
              <stop offset="0.600" stopColor="#2fc0b8" />
              <stop offset="1" stopColor="#c9d63a" />
            </linearGradient>
            <linearGradient id="copilotRight" x1="0" y1="0" x2="0" y2="1">
              <stop offset="0" stopColor="#9a62e8" />
              <stop offset="1" stopColor="#f0648a" />
            </linearGradient>
          </defs>
          <path d="M5 1h8c2 0 2.500 2 3 4h-3c-1.500 0-2 1-2.500 2.500L9 13c-.5 1.500-1.500 2-3 2H3c-2.500 0-3.300-2-2.700-4L2.600 3C3 1.700 3.800 1 5 1z" fill="url(#copilotLeft)" />
          <path d="M13 5h4.500c2.500 0 3.300 2 2.700 4l-2 6c-.5 1.500-1.500 3-3 3H8c2 0 2.500-2 3-4l1.500-6.500c.3-1.200.5-2.500.5-2.500z" fill="url(#copilotRight)" />
          <rect x="5" y="13.500" width="15" height="6.500" rx="1" fill="#f6b73c" />
          <text x="6" y="19" fontSize="6" fontWeight="700" fontFamily="Liberation Sans, sans-serif" fill="#1b1b1b">
            PRE
          </text>
        </Svg>
      </button>
    </div>
  );
}

function Taskbar() {
  return (
    <footer className="flex h-[41px] shrink-0 items-center border-t border-black bg-linear-to-r from-[#203740] via-[#20303f] to-[#1a2543] text-white">
      <button aria-label="Start" className="flex w-12 justify-center">
        <Svg w={16} h={16} stroke="none">
          <path d="M0 2.200 6.600 1.300v6.300H0zM7.400 1.200 16 0v7.600H7.400zM0 8.400h6.600v6.300L0 13.800zM7.400 8.400H16V16l-8.600-1.200z" fill="#fff" />
        </Svg>
      </button>
      <label className="flex h-10 w-72 items-center overflow-hidden border border-[#c9c9c9] bg-[#f2f2f2] pl-[11px] text-[#252423]">
        <Svg w={17} h={17} stroke="#111" strokeWidth="1.300">
          <circle cx="10.500" cy="6.500" r="5.500" />
          <path d="M6.500 10.500.8 16.200" />
        </Svg>
        <input
          aria-label="Type here to search"
          placeholder="Type here to search"
          className="ml-[11px] min-w-0 flex-1 bg-transparent text-[14px] outline-none placeholder:text-[#3b3a39]"
        />
        <StormArt />
      </label>
      <button aria-label="Task view" className="flex w-[50px] justify-center">
        <TaskViewIcon />
      </button>
      {apps.map((app) => (
        <button
          key={app.name}
          aria-label={app.name}
          className={"relative flex h-full w-[49px] items-center justify-center " + (app.active ? "bg-[#4a5a66]" : "")}
        >
          {app.icon}
          {app.open && (
            <span className={"absolute bottom-0 h-[2px] bg-[#76b9ed] " + (app.active ? "inset-x-0" : "inset-x-1")} />
          )}
        </button>
      ))}
      <Tray />
    </footer>
  );
}

/* ---------- app ---------- */

export default function App() {
  return (
    <div className="flex min-h-screen flex-col overflow-hidden bg-white font-['Open_Sans','Noto_Sans',sans-serif]">
      <TitleBar />
      <Ribbon />
      <div className="flex flex-1">
        <ViewRail />
        <div className="flex min-w-0 flex-1 flex-col">
          <div className="flex flex-1">
            <Canvas />
            <SidePane
              name="Filters"
              className="w-[33px] border-l border-[#a19f9d] bg-white"
              icon={
                <Svg w={13} h={13} className="mt-[13px]" strokeWidth="1.300">
                  <path d="M12 1v11l-5-4H1V5h6z" />
                </Svg>
              }
            />
          </div>
          <PageTabs />
        </div>
        <SidePane name="Visualizations" className="w-[35px] border-l border-[#dddbd9] bg-[#f3f2f1]" />
        <SidePane name="Data" className="w-[35px] border-l border-[#dddbd9] bg-[#f3f2f1]" />
      </div>
      <StatusBar />
      <Taskbar />
    </div>
  );
}
